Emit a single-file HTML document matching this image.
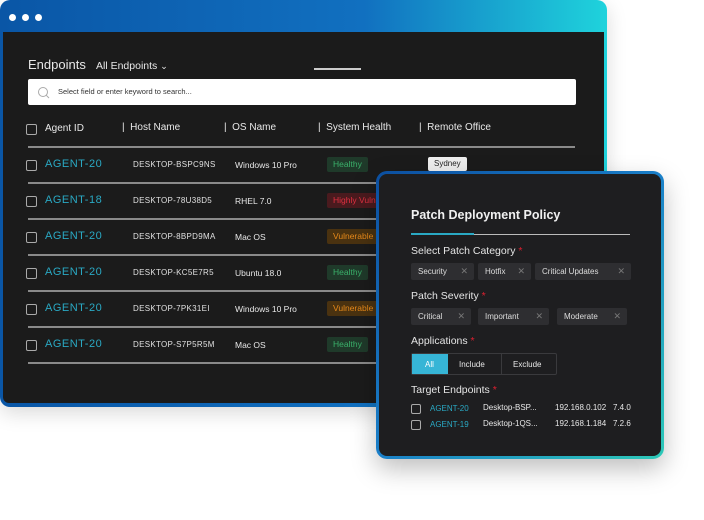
<!DOCTYPE html>
<html><head><meta charset="utf-8"><style>
*{margin:0;padding:0;box-sizing:border-box}
body{width:704px;height:520px;background:#fff;position:relative;overflow:hidden;font-family:"Liberation Sans",sans-serif;color:#e8e8e8}
.win{position:absolute;left:0;top:0;width:607px;height:407px;border-radius:10px;background:linear-gradient(90deg,#0a56a6 0%,#1170c0 60%,#1fd3dc 100%);padding:0 3px 4px 3px;box-shadow:0 6px 20px rgba(0,0,0,.15)}
.body{position:absolute;left:3px;top:32px;right:3px;bottom:4px;background:#1b1b1b;border-radius:0 0 6px 6px}
.dot{position:absolute;top:14px;width:7px;height:7px;border-radius:50%;background:#fff}
.t{position:absolute;white-space:nowrap}
.line{position:absolute;left:28px;width:547px;height:2px;background:#8a8a8a}
.cb{position:absolute;width:11px;height:11px;border:1.3px solid #aaa;border-radius:2px}
.ag{color:#2aa9c4;font-size:11px;letter-spacing:.5px}
.hn{font-size:8px;color:#e0e0e0;letter-spacing:.3px}
.os{font-size:8.5px;color:#e8e8e8}
.badge{position:absolute;height:15px;padding:0 6px;font-size:8.5px;line-height:15px;border-radius:2px}
.h{background:#1f3a2a;color:#3ab06a}
.r{background:#4a1a1e;color:#e03040}
.v{background:#4a3210;color:#e88a1a}
.pop{position:absolute;left:376px;top:171px;width:288px;height:288px;border-radius:11px;background:linear-gradient(135deg,#0c4fa0 0%,#1a7fc8 50%,#2dc9b8 100%);padding:3px;box-shadow:0 10px 25px rgba(0,0,0,.25)}
.pin{width:100%;height:100%;background:#1e1e20;border-radius:8px;position:relative}
.lbl{font-size:10.5px;color:#e4e4e4}
.st{color:#e02030}
.chip{position:absolute;height:17px;background:#2e2e31;border-radius:2px;font-size:8px;line-height:17px;padding-left:7px;color:#ddd}
.chip i{position:absolute;right:6px;font-style:normal;color:#777;font-size:9px}
</style></head><body>
<div class="win">
 <div class="dot" style="left:9px"></div><div class="dot" style="left:22px"></div><div class="dot" style="left:35px"></div>
 <div class="body"></div>
</div>
<div class="t" style="left:28px;top:57px;font-size:13px">Endpoints</div>
<div class="t" style="left:96px;top:60px;font-size:10.5px">All Endpoints <span style="font-size:9px">&#8964;</span></div>
<div style="position:absolute;left:314px;top:68px;width:47px;height:2px;background:#ccc"></div>
<div style="position:absolute;left:28px;top:79px;width:548px;height:26px;background:#fff;border-radius:2px"></div>
<svg style="position:absolute;left:37px;top:86px" width="13" height="13"><circle cx="6" cy="6" r="4.5" fill="none" stroke="#aaa" stroke-width="1"/><line x1="9.3" y1="9.3" x2="12" y2="12" stroke="#aaa"/></svg>
<div class="t" style="left:58px;top:87px;font-size:7.5px;color:#333">Select field or enter keyword to search...</div>
<div class="cb" style="left:26px;top:124px"></div>
<div class="t" style="left:45px;top:123px;font-size:10px">Agent ID</div>
<div class="t" style="left:122px;top:122px;font-size:10px">|&nbsp; Host Name</div>
<div class="t" style="left:224px;top:122px;font-size:10px">|&nbsp; OS Name</div>
<div class="t" style="left:318px;top:122px;font-size:10px">|&nbsp; System Health</div>
<div class="t" style="left:419px;top:122px;font-size:10px">|&nbsp; Remote Office</div>
<div class="line" style="top:146px"></div>

<div class="cb" style="left:26px;top:160px"></div><div class="t ag" style="left:45px;top:158px">AGENT-20</div><div class="t hn" style="left:133px;top:160px">DESKTOP-BSPC9NS</div><div class="t os" style="left:235px;top:160px">Windows 10 Pro</div><div class="badge h" style="left:327px;top:157px">Healthy</div>
<div class="t" style="left:428px;top:157px;height:14px;background:#eee;color:#222;font-size:8px;line-height:14px;padding:0 6px;border-radius:2px">Sydney</div>
<div class="line" style="top:182px"></div>
<div class="cb" style="left:26px;top:196px"></div><div class="t ag" style="left:45px;top:194px">AGENT-18</div><div class="t hn" style="left:133px;top:196px">DESKTOP-78U38D5</div><div class="t os" style="left:235px;top:196px">RHEL 7.0</div><div class="badge r" style="left:327px;top:193px">Highly Vulnerable</div>
<div class="line" style="top:218px"></div>
<div class="cb" style="left:26px;top:232px"></div><div class="t ag" style="left:45px;top:230px">AGENT-20</div><div class="t hn" style="left:133px;top:232px">DESKTOP-8BPD9MA</div><div class="t os" style="left:235px;top:232px">Mac OS</div><div class="badge v" style="left:327px;top:229px">Vulnerable</div>
<div class="line" style="top:254px"></div>
<div class="cb" style="left:26px;top:268px"></div><div class="t ag" style="left:45px;top:266px">AGENT-20</div><div class="t hn" style="left:133px;top:268px">DESKTOP-KC5E7R5</div><div class="t os" style="left:235px;top:268px">Ubuntu 18.0</div><div class="badge h" style="left:327px;top:265px">Healthy</div>
<div class="line" style="top:290px"></div>
<div class="cb" style="left:26px;top:304px"></div><div class="t ag" style="left:45px;top:302px">AGENT-20</div><div class="t hn" style="left:133px;top:304px">DESKTOP-7PK31EI</div><div class="t os" style="left:235px;top:304px">Windows 10 Pro</div><div class="badge v" style="left:327px;top:301px">Vulnerable</div>
<div class="line" style="top:326px"></div>
<div class="cb" style="left:26px;top:340px"></div><div class="t ag" style="left:45px;top:338px">AGENT-20</div><div class="t hn" style="left:133px;top:340px">DESKTOP-S7P5R5M</div><div class="t os" style="left:235px;top:340px">Mac OS</div><div class="badge h" style="left:327px;top:337px">Healthy</div>
<div class="line" style="top:362px"></div>

<div class="pop"><div class="pin">
 <div class="t" style="left:32px;top:34px;font-size:12.5px;font-weight:bold;color:#f0f0f0">Patch Deployment Policy</div>
 <div style="position:absolute;left:32px;top:60px;width:219px;height:1px;background:#bbb"></div>
 <div style="position:absolute;left:32px;top:59px;width:63px;height:2px;background:#2aa9c4"></div>
 <div class="t lbl" style="left:32px;top:71px">Select Patch Category <span class="st">*</span></div>
 <div class="chip" style="left:32px;top:89px;width:63px">Security<i>✕</i></div>
 <div class="chip" style="left:99px;top:89px;width:53px">Hotfix<i>✕</i></div>
 <div class="chip" style="left:156px;top:89px;width:96px">Critical Updates<i>✕</i></div>
 <div class="t lbl" style="left:32px;top:116px">Patch Severity <span class="st">*</span></div>
 <div class="chip" style="left:32px;top:134px;width:60px">Critical<i>✕</i></div>
 <div class="chip" style="left:99px;top:134px;width:71px">Important<i>✕</i></div>
 <div class="chip" style="left:178px;top:134px;width:70px">Moderate<i>✕</i></div>
 <div class="t lbl" style="left:32px;top:161px">Applications <span class="st">*</span></div>
 <div style="position:absolute;left:32px;top:179px;width:146px;height:22px;border:1px solid #3a3a3d;border-radius:2px"></div>
 <div style="position:absolute;left:33px;top:180px;width:36px;height:20px;background:#36b5d6"></div>
 <div style="position:absolute;left:122px;top:180px;width:1px;height:20px;background:#3a3a3d"></div>
 <div class="t" style="left:46px;top:186px;font-size:8px;color:#fff">All</div>
 <div class="t" style="left:80px;top:186px;font-size:8px">Include</div>
 <div class="t" style="left:134px;top:186px;font-size:8px">Exclude</div>
 <div class="t lbl" style="left:32px;top:210px">Target Endpoints <span class="st">*</span></div>
 <div class="cb" style="left:32px;top:230px;width:10px;height:10px"></div>
 <div class="t" style="left:51px;top:230px;font-size:8px;color:#2aa9c4">AGENT-20</div>
 <div class="t" style="left:104px;top:229px;font-size:8px">Desktop-BSP...</div>
 <div class="t" style="left:176px;top:229px;font-size:8px">192.168.0.102</div>
 <div class="t" style="left:234px;top:229px;font-size:8px">7.4.0</div>
 <div class="cb" style="left:32px;top:246px;width:10px;height:10px"></div>
 <div class="t" style="left:51px;top:246px;font-size:8px;color:#2aa9c4">AGENT-19</div>
 <div class="t" style="left:104px;top:245px;font-size:8px">Desktop-1QS...</div>
 <div class="t" style="left:176px;top:245px;font-size:8px">192.168.1.184</div>
 <div class="t" style="left:234px;top:245px;font-size:8px">7.2.6</div>
</div></div>
</body></html>
